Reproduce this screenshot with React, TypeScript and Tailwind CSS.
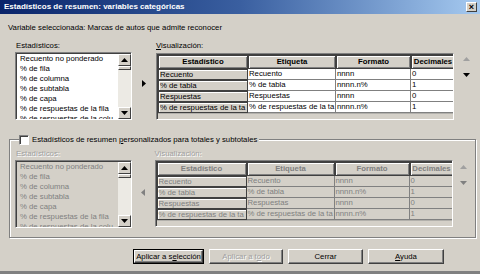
import React from "react";

const F = "font-['Liberation_Sans',Arial,sans-serif]";

function UpTri({ color = "#000" }: { color?: string }) {
  return (
    <svg width="7" height="4" viewBox="0 0 7 4">
      <polygon points="0,4 7,4 3.5,0" fill={color} />
    </svg>
  );
}
function DownTri({ color = "#000" }: { color?: string }) {
  return (
    <svg width="7" height="4" viewBox="0 0 7 4">
      <polygon points="0,0 7,0 3.5,4" fill={color} />
    </svg>
  );
}

const items = [
  "Recuento no ponderado",
  "% de fila",
  "% de columna",
  "% de subtabla",
  "% de capa",
  "% de respuestas de la fila",
  "% de respuestas de la colu",
];

function ListBox({ disabled }: { disabled?: boolean }) {
  return (
    <div
      className={`w-[117px] h-[68px] flex border border-t-[#808080] border-l-[#808080] border-r-white border-b-white shadow-[inset_1px_1px_0_#404040] ${
        disabled ? "bg-[#D4D0C8] text-[#808080]" : "bg-white text-black"
      }`}
    >
      <div className="flex-1 overflow-hidden pl-[4px] pt-[1px] leading-[10px] whitespace-nowrap">
        {items.map((t) => (
          <div key={t}>{t}</div>
        ))}
      </div>
      <div className="w-[13px] mt-[1px] flex flex-col bg-[#ECEAE4]">
        <div className="h-[12px] flex items-center justify-center bg-[#D4D0C8] border border-t-white border-l-white border-r-[#404040] border-b-[#404040]">
          <UpTri />
        </div>
        <div className="h-[4px] bg-[#D4D0C8] border border-t-white border-l-white border-r-[#404040] border-b-[#404040]" />
        <div className="flex-1" />
        <div className="h-[12px] flex items-center justify-center bg-[#D4D0C8] border border-t-white border-l-white border-r-[#404040] border-b-[#404040]">
          <DownTri />
        </div>
      </div>
    </div>
  );
}

const rows = [
  ["Recuento", "Recuento", "nnnn", "0"],
  ["% de tabla", "% de tabla", "nnnn.n%", "1"],
  ["Respuestas", "Respuestas", "nnnn", "0"],
  ["% de respuestas de la ta", "% de respuestas de la ta", "nnnn.n%", "1"],
];

const widths = ["w-[90px]", "w-[88px]", "w-[75px]", "w-[44px]"];

function Table({ disabled }: { disabled?: boolean }) {
  const heads = ["Estadístico", "Etiqueta", "Formato", "Decimales"];
  const txt = disabled ? "text-[#808080]" : "text-black";
  return (
    <div className="w-[298px] h-[67px] bg-[#D4D0C8] border border-t-[#808080] border-l-[#808080] border-r-white border-b-white shadow-[inset_1px_1px_0_#404040] pl-[1px] pt-[1px] overflow-hidden">
      <div className="flex h-[14px]">
        {heads.map((h, i) => (
          <div
            key={h}
            className={`${widths[i]} shrink-0 flex items-center justify-center font-bold ${txt} border border-[#404040] shadow-[inset_1px_1px_0_white,inset_-1px_-1px_0_#808080] overflow-hidden whitespace-nowrap`}
          >
            {h}
          </div>
        ))}
      </div>
      {rows.map((r, ri) => (
        <div key={ri} className="flex h-[11px]">
          {r.map((c, ci) => (
            <div
              key={ci}
              className={`${widths[ci]} shrink-0 overflow-hidden whitespace-nowrap leading-[10px] pl-[1px] ${
                ci === 0
                  ? `bg-[#D4D0C8] border border-[#404040] shadow-[inset_1px_1px_0_white] ${txt}`
                  : `${disabled ? "bg-[#D4D0C8] text-[#808080]" : "bg-white text-black"} border-r border-b border-[#808080]`
              }`}
            >
              {c}
            </div>
          ))}
        </div>
      ))}
      <div className="h-[1px] w-[297px] bg-[#808080] opacity-40" />
    </div>
  );
}

function Btn({
  children,
  w,
  def,
  disabled,
}: {
  children: React.ReactNode;
  w: string;
  def?: boolean;
  disabled?: boolean;
}) {
  return (
    <div className={`${w} h-[15px] ${def ? "border border-black" : ""} bg-[#D4D0C8]`}>
      <div
        className={`w-full h-full flex items-center justify-center border border-t-white border-l-white border-r-[#404040] border-b-[#404040] shadow-[inset_-1px_-1px_0_#808080] ${
          disabled ? "text-[#A0A0A0] [text-shadow:1px_1px_0_white]" : "text-black"
        }`}
      >
        {children}
      </div>
    </div>
  );
}

function Side({ disabled }: { disabled?: boolean }) {
  return (
    <div className="w-[24px] flex flex-col items-center pt-[16px] gap-[12px]">
      <UpTri color="#A0A0A0" />
      <DownTri color={disabled ? "#808080" : "#000"} />
    </div>
  );
}

export default function App() {
  return (
    <div className={`w-[480px] h-[274px] bg-[#D4D0C8] text-[7.75px] ${F} flex flex-col overflow-hidden border-b-[3px] border-[#808080]`}>
      {/* Title bar */}
      <div className="h-[14px] shrink-0 flex items-center justify-between pl-[4px] pr-[3px] bg-linear-to-r from-[#0A246A] via-[#3A5FA0] to-[#A6CAF0]">
        <span className="text-white font-bold text-[8px] leading-none">
          Estadísticos de resumen: variables categóricas
        </span>
        <div className="w-[11px] h-[10px] bg-[#D4D0C8] border border-t-white border-l-white border-r-[#404040] border-b-[#404040] flex items-center justify-center text-[9px] font-bold leading-none text-black">
          ×
        </div>
      </div>

      <div className="pl-[8px] pt-[9px] leading-[10px]">
        Variable seleccionada: Marcas de autos que admite reconocer
      </div>

      {/* Upper section */}
      <div className="flex pl-[15px] pt-[8px]">
        <div className="flex flex-col">
          <div className="pl-[1px] h-[10px] leading-[10px] mb-[1px]">Estadísticos:</div>
          <ListBox />
        </div>
        <div className="w-[24px] flex items-center justify-center pt-[6px]">
          <svg width="4" height="7" viewBox="0 0 4 7">
            <polygon points="0,0 4,3.5 0,7" fill="#000" />
          </svg>
        </div>
        <div className="flex flex-col">
          <div className="h-[10px] leading-[10px] mb-[2px]">
            <span className="underline">V</span>isualización:
          </div>
          <Table />
        </div>
        <Side />
      </div>

      {/* Group box */}
      <div className="relative ml-[9px] mr-[4px] mt-[19px] h-[99px] border border-[#808080] shadow-[inset_1px_1px_0_white,1px_1px_0_white]">
        <div className="absolute left-[9px] -top-[5px] flex items-center bg-[#D4D0C8] pr-[2px]">
          <div className="w-[10px] h-[10px] bg-white border border-t-[#808080] border-l-[#808080] border-r-white border-b-white shadow-[inset_1px_1px_0_#404040]" />
          <span className="pl-[3px] leading-[10px]">
            Estadísticos de resumen <span className="underline">p</span>ersonalizados para totales y subtotales
          </span>
        </div>
        <div className="flex pl-[5px] pt-[9px]">
          <div className="flex flex-col">
            <div className="pl-[1px] h-[10px] leading-[10px] mb-[1px] text-[#A0A0A0] [text-shadow:1px_1px_0_white]">
              Estadísticos:
            </div>
            <ListBox disabled />
          </div>
          <div className="w-[24px] flex items-center justify-center pt-[8px]">
            <svg width="4" height="7" viewBox="0 0 4 7">
              <polygon points="4,0 0,3.5 4,7" fill="#808080" />
            </svg>
          </div>
          <div className="flex flex-col">
            <div className="h-[10px] leading-[10px] mb-[1px] text-[#A0A0A0] [text-shadow:1px_1px_0_white]">
              Visualización:
            </div>
            <Table disabled />
          </div>
          <Side disabled />
        </div>
      </div>

      {/* Buttons */}
      <div className="flex pl-[133px] pt-[11px] gap-[5px]">
        <Btn w="w-[71px]" def>
          <span>
            Aplicar a s<span className="underline">e</span>lección
          </span>
        </Btn>
        <Btn w="w-[74px]" disabled>
          <span>
            Aplicar a t<span className="underline">o</span>do
          </span>
        </Btn>
        <Btn w="w-[75px]">Cerrar</Btn>
        <Btn w="w-[76px]">
          <span>
            <span className="underline">A</span>yuda
          </span>
        </Btn>
      </div>
    </div>
  );
}
